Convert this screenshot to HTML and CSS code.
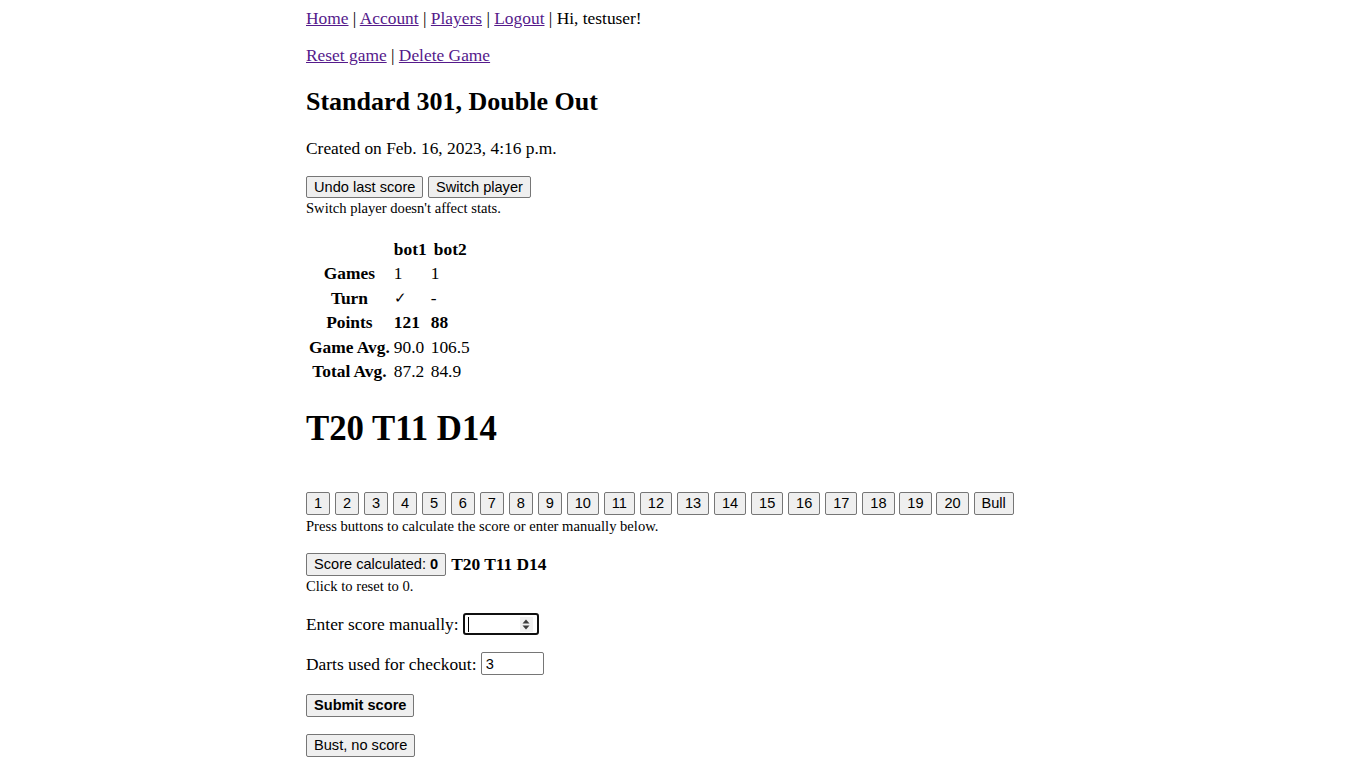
FILE: index.html
```html
<!DOCTYPE html>
<html>
<head>
<meta charset="utf-8">
<link rel="stylesheet" href="styles.css">
</head>
<body>
<div class="page">
  <div class="nav">
    <a href="#">Home</a> | <a href="#">Account</a> | <a href="#">Players</a> | <a href="#">Logout</a> | Hi, testuser!
  </div>
  <div class="actions">
    <a href="#">Reset game</a> | <a href="#">Delete Game</a>
  </div>
  <h2 class="title">Standard 301, Double Out</h2>
  <p class="created">Created on Feb. 16, 2023, 4:16 p.m.</p>
  <div class="btnrow">
    <button class="btn">Undo last score</button>
    <button class="btn">Switch player</button>
  </div>
  <div class="note">Switch player doesn't affect stats.</div>

  <table class="stats">
    <tr><th></th><th>bot1</th><th>bot2</th></tr>
    <tr><th>Games</th><td>1</td><td>1</td></tr>
    <tr><th>Turn</th><td class="check">&#10003;</td><td>-</td></tr>
    <tr><th>Points</th><td><b>121</b></td><td><b>88</b></td></tr>
    <tr><th>Game Avg.</th><td>90.0</td><td>106.5</td></tr>
    <tr><th>Total Avg.</th><td>87.2</td><td>84.9</td></tr>
  </table>

  <h1 class="darts">T20 T11 D14</h1>

  <div class="numrow">
    <button class="btn">1</button>
    <button class="btn">2</button>
    <button class="btn">3</button>
    <button class="btn">4</button>
    <button class="btn">5</button>
    <button class="btn">6</button>
    <button class="btn">7</button>
    <button class="btn">8</button>
    <button class="btn">9</button>
    <button class="btn">10</button>
    <button class="btn">11</button>
    <button class="btn">12</button>
    <button class="btn">13</button>
    <button class="btn">14</button>
    <button class="btn">15</button>
    <button class="btn">16</button>
    <button class="btn">17</button>
    <button class="btn">18</button>
    <button class="btn">19</button>
    <button class="btn">20</button>
    <button class="btn">Bull</button>
  </div>
  <div class="note note-press">Press buttons to calculate the score or enter manually below.</div>

  <div class="calcrow">
    <button class="btn">Score calculated: <b>0</b></button>
    <b class="calcdarts">T20 T11 D14</b>
  </div>
  <div class="note note-click">Click to reset to 0.</div>

  <div class="field field-enter">Enter score manually: <span class="numinput"><span class="caret"></span><span class="spin"><svg width="8" height="11" viewBox="0 0 8 11"><path d="M4 0.5 L7.5 4.5 L0.5 4.5 Z M4 10.5 L7.5 6.5 L0.5 6.5 Z" fill="#3b3b3b"/></svg></span></span></div>
  <div class="field field-darts">Darts used for checkout: <input class="textinput" type="text" value="3"></div>
  <div class="field field-submit"><button class="btn bold">Submit score</button></div>
  <div class="field field-bust"><button class="btn">Bust, no score</button></div>
</div>
</body>
</html>
```

FILE: styles.css
```css
html, body {
  margin: 0;
  padding: 0;
  background: #fff;
}
body {
  font-family: "Liberation Serif", "Times New Roman", serif;
  font-size: 17.4px;
  color: #000;
}
.page {
  width: 754px;
  margin: 0 auto;
  padding-top: 8px;
}
a {
  color: #551a8b;
  text-decoration: underline;
}
.nav {
  line-height: 20px;
}
.actions {
  margin-top: 17px;
  line-height: 20px;
}
.title {
  font-size: 26px;
  font-weight: bold;
  margin: 22px 0 0;
  line-height: 30px;
}
.created {
  margin: 21px 0 0;
  line-height: 20px;
}
.btnrow {
  margin-top: 18px;
  display: flex;
  gap: 4.7px;
}
.btn {
  font-family: "Liberation Sans", Arial, sans-serif;
  font-size: 14.6px;
  color: #000;
  background: #efefef;
  border: 1px solid #767676;
  border-radius: 2px;
  padding: 0 7px;
  height: 23px;
  line-height: 21px;
}
.btnrow .btn {
  height: 22px;
  line-height: 20px;
}
.btn.bold {
  font-weight: bold;
}
.note {
  font-size: 14.6px;
  line-height: 17px;
  margin-top: 2px;
}
.stats {
  margin-top: 19px;
  border-spacing: 2px;
  font-size: 17.4px;
}
.stats th, .stats td {
  padding: 1px;
  line-height: 20.4px;
}
.stats td {
  text-align: left;
}
.stats th {
  text-align: center;
}
.check {
  font-family: "DejaVu Sans", sans-serif;
  font-size: 15px;
  font-weight: 200;
}
.darts {
  font-size: 34.8px;
  font-weight: bold;
  margin: 25px 0 0;
  line-height: 40px;
}
.numrow {
  margin-top: 43px;
  display: flex;
  gap: 4.85px;
}
.note-press {
  margin-top: 3px;
}
.calcrow {
  margin-top: 18px;
  display: flex;
  align-items: center;
  gap: 5px;
}
.note-click {
  margin-top: 2px;
}
.calcdarts {
  font-size: 17.4px;
}
.field {
  display: flex;
  align-items: center;
  line-height: 20px;
  gap: 4.4px;
}
.field-enter {
  margin-top: 18px;
  height: 22px;
}
.field-darts {
  margin-top: 17px;
  height: 23px;
}
.field-submit {
  margin-top: 19px;
}
.field-bust {
  margin-top: 17px;
}
.numinput {
  display: inline-flex;
  align-items: center;
  justify-content: space-between;
  box-sizing: border-box;
  width: 76px;
  height: 22px;
  border: 2px solid #101010;
  border-radius: 3px;
  padding: 0 4px 0 3px;
}
.caret {
  width: 1px;
  height: 15px;
  background: #000;
}
.spin {
  display: inline-flex;
  width: 13px;
  height: 15px;
  background: #f0f0f0;
  align-items: center;
  justify-content: center;
}
.textinput {
  box-sizing: border-box;
  width: 63px;
  height: 23px;
  margin: 0;
  border: 1px solid #767676;
  border-radius: 2px;
  font-family: "Liberation Sans", Arial, sans-serif;
  font-size: 14.6px;
  padding: 1px 4px;
}
```
